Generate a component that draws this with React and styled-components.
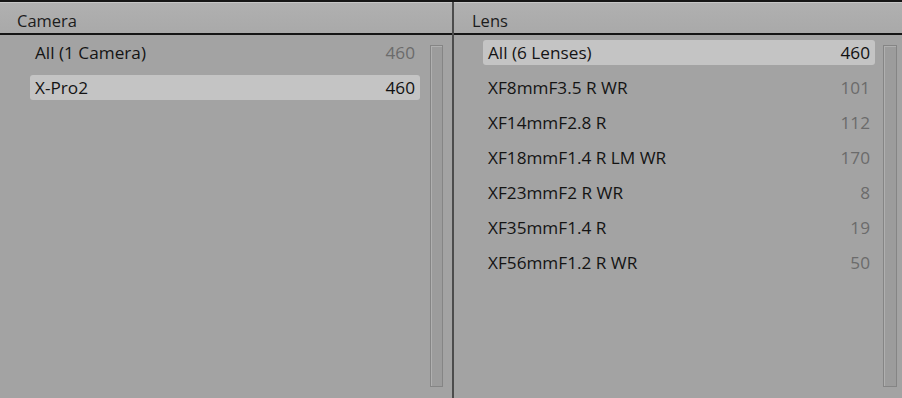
import React from 'react'
import styled, { createGlobalStyle } from 'styled-components'

const GlobalStyle = createGlobalStyle`
  html, body {
    margin: 0;
    padding: 0;
    background: #a3a3a3;
  }
  body {
    font-family: "Open Sans", "DejaVu Sans", sans-serif;
  }
`

const Browser = styled.div`
  display: grid;
  grid-template-columns: 452px 1fr;
  height: 398px;
  border-top: 2px solid #151515;
  box-sizing: border-box;
  overflow: hidden;
`

const Column = styled.div`
  display: flex;
  flex-direction: column;
  min-width: 0;
  border-left: ${p => (p.$divided ? '2px solid #4c4c4c' : 'none')};
`

const Header = styled.div`
  height: 26px;
  display: flex;
  align-items: center;
  padding: 4px 0 0 ${p => p.$indent}px;
  box-sizing: content-box;
  background: linear-gradient(#b0b0b0, #a9a9a9);
  border-top: 1px solid #c6c6c6;
  border-bottom: 2px solid #151515;
  font-size: 16.5px;
  color: #1c1c1c;
`

const Body = styled.div`
  flex: 1;
  display: flex;
  padding: 5px ${p => p.$right}px 11px ${p => p.$left}px;
  gap: ${p => p.$gap}px;
  min-height: 0;
`

const List = styled.div`
  flex: 1;
  display: flex;
  flex-direction: column;
  gap: 10px;
`

const Row = styled.div`
  height: 25px;
  display: flex;
  align-items: center;
  justify-content: space-between;
  padding: 0 5px;
  border-radius: 3px;
  background: ${p => (p.$selected ? '#c4c4c4' : 'transparent')};
  font-size: 17.2px;
  color: #141414;
`

const Count = styled.span`
  color: ${p => (p.$selected ? '#111' : '#6b6b6b')};
`

const Scrollbar = styled.div`
  width: ${p => p.$width}px;
  margin-top: 5px;
  box-sizing: border-box;
  border: 1px solid #858585;
  background: #9c9c9c;
  box-shadow: inset 1px 1px 0 #b0b0b0;
`

const cameras = [
  { name: 'All (1 Camera)', count: 460 },
  { name: 'X-Pro2', count: 460, selected: true },
]

const lenses = [
  { name: 'All (6 Lenses)', count: 460, selected: true },
  { name: 'XF8mmF3.5 R WR', count: 101 },
  { name: 'XF14mmF2.8 R', count: 112 },
  { name: 'XF18mmF1.4 R LM WR', count: 170 },
  { name: 'XF23mmF2 R WR', count: 8 },
  { name: 'XF35mmF1.4 R', count: 19 },
  { name: 'XF56mmF1.2 R WR', count: 50 },
]

function Items({ items }) {
  return (
    <List>
      {items.map(item => (
        <Row key={item.name} $selected={item.selected}>
          <span>{item.name}</span>
          <Count $selected={item.selected}>{item.count}</Count>
        </Row>
      ))}
    </List>
  )
}

export default function App() {
  return (
    <>
      <GlobalStyle />
      <Browser>
        <Column>
          <Header $indent={17}>Camera</Header>
          <Body $left={30} $right={9} $gap={10}>
            <Items items={cameras} />
            <Scrollbar $width={13} />
          </Body>
        </Column>
        <Column $divided>
          <Header $indent={18}>Lens</Header>
          <Body $left={29} $right={5} $gap={8}>
            <Items items={lenses} />
            <Scrollbar $width={14} />
          </Body>
        </Column>
      </Browser>
    </>
  )
}
